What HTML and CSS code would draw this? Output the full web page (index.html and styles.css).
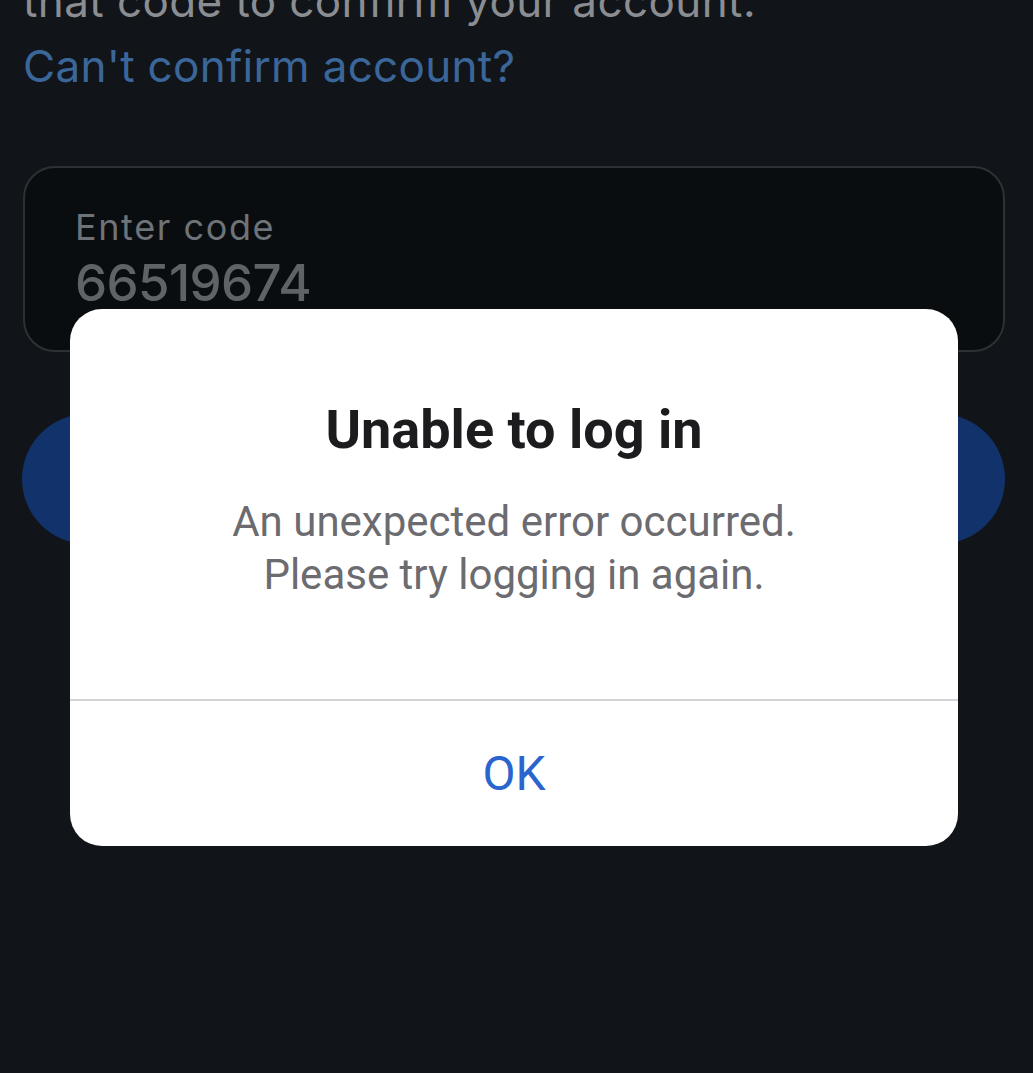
FILE: index.html
```html
<!DOCTYPE html>
<html lang="en">
<head>
<meta charset="utf-8">
<title>Confirm account</title>
<link rel="stylesheet" href="styles.css">
</head>
<body>
<main class="screen">
  <p class="intro">that code to confirm your account.</p>
  <a class="link" href="#">Can't confirm account?</a>
  <div class="field">
    <span class="field-label">Enter code</span>
    <span class="field-value">66519674</span>
  </div>
  <div class="primary-btn"></div>
</main>

<div class="dialog" role="alertdialog">
  <div class="dialog-body">
    <h2 class="dialog-title">Unable to log in</h2>
    <p class="dialog-msg">An unexpected error occurred.<br>Please try logging in again.</p>
  </div>
  <div class="dialog-actions">
    <button class="dialog-ok" type="button">OK</button>
  </div>
</div>
</body>
</html>
```

FILE: styles.css
```css
html, body {
  margin: 0;
  height: 100%;
  background: #111519;
  overflow: hidden;
}

body {
  font-family: Inter, "Noto Sans", sans-serif;
}

.screen {
  display: flex;
  flex-direction: column;
  padding: 0 28px 0 23px;
}

.intro {
  margin: -25px 0 0;
  font-size: 44px;
  line-height: 52px;
  color: #8a8d91;
  white-space: nowrap;
  letter-spacing: 0.4px;
}

.link {
  margin-top: 13px;
  font-size: 44px;
  line-height: 52px;
  color: #3b6699;
  text-decoration: none;
  letter-spacing: 0.3px;
}

.field {
  margin-top: 74px;
  height: 182px;
  box-sizing: content-box;
  border: 2px solid #2c3136;
  border-radius: 32px;
  background: #0a0d10;
  padding: 0 50px;
  display: flex;
  flex-direction: column;
}

.field-label {
  margin-top: 37px;
  font-size: 36px;
  line-height: 44px;
  color: #6e7378;
  letter-spacing: 1.6px;
}

.field-value {
  margin-top: 6px;
  font-size: 51px;
  line-height: 56px;
  font-weight: 500;
  color: #5f6368;
  letter-spacing: -0.6px;
}

.primary-btn {
  margin-top: 62px;
  margin-left: -1px;
  height: 130px;
  border-radius: 65px;
  background: #12326b;
}

/* alert dialog floats above the page */
.dialog {
  position: absolute;
  top: 309px;
  left: 70px;
  width: 888px;
  height: 537px;
  background: #ffffff;
  border-radius: 32px;
  display: flex;
  flex-direction: column;
  font-family: Roboto, "Liberation Sans", sans-serif;
  overflow: hidden;
}

.dialog-body {
  height: 390px;
  display: flex;
  flex-direction: column;
  align-items: center;
  text-align: center;
}

.dialog-title {
  margin: 86px 0 0;
  font-size: 54px;
  line-height: 70px;
  font-weight: 700;
  color: #1c1c1f;
}

.dialog-msg {
  margin: 30px 0 0;
  font-size: 42px;
  line-height: 53px;
  color: #6b6b70;
}

.dialog-actions {
  border-top: 2px solid #d3d3d7;
  flex: 1;
  display: flex;
}

.dialog-ok {
  flex: 1;
  border: 0;
  background: transparent;
  font-family: Roboto, "Liberation Sans", sans-serif;
  font-size: 48px;
  color: #2a64cf;
  padding: 0;
}
```
